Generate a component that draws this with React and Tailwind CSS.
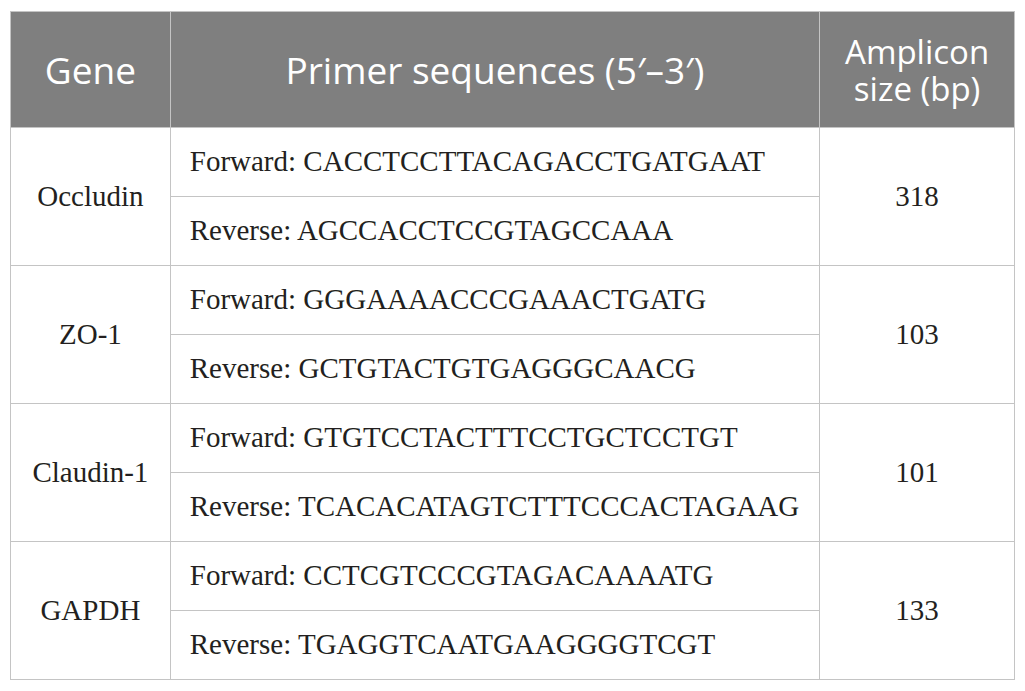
const rows = [
  { gene: "Occludin", fwd: "CACCTCCTTACAGACCTGATGAAT", rev: "AGCCACCTCCGTAGCCAAA", size: "318" },
  { gene: "ZO-1", fwd: "GGGAAAACCCGAAACTGATG", rev: "GCTGTACTGTGAGGGCAACG", size: "103" },
  { gene: "Claudin-1", fwd: "GTGTCCTACTTTCCTGCTCCTGT", rev: "TCACACATAGTCTTTCCCACTAGAAG", size: "101" },
  { gene: "GAPDH", fwd: "CCTCGTCCCGTAGACAAAATG", rev: "TGAGGTCAATGAAGGGGTCGT", size: "133" },
];

export default function App() {
  return (
    <div className="w-[1025px] h-[691px] bg-white pt-[11px] pl-[10px]">
      <table className="w-[1005px] border-collapse text-[#231f20] font-['Liberation_Serif',serif] text-[29px]">
        <colgroup>
          <col className="w-[160px]" />
          <col className="w-[650px]" />
          <col className="w-[195px]" />
        </colgroup>
        <thead>
          <tr className="h-[116px] bg-[#7f7f7f] text-white font-['Open_Sans',sans-serif] text-[37px]">
            <th className="border border-[#c4c4c4] font-normal">Gene</th>
            <th className="border border-[#c4c4c4] font-normal">Primer sequences (5′–3′)</th>
            <th className="border border-[#c4c4c4] font-normal text-[33px] leading-[37px]">Amplicon<br />size (bp)</th>
          </tr>
        </thead>
        <tbody>
          {rows.map((r) => (
            <>
              <tr key={r.gene + "f"} className="h-[69px]">
                <td rowSpan={2} className="border border-[#c4c4c4] text-center">{r.gene}</td>
                <td className="border border-[#c4c4c4] pl-[19px]">Forward: {r.fwd}</td>
                <td rowSpan={2} className="border border-[#c4c4c4] text-center">{r.size}</td>
              </tr>
              <tr key={r.gene + "r"} className="h-[69px]">
                <td className="border border-[#c4c4c4] pl-[19px]">Reverse: {r.rev}</td>
              </tr>
            </>
          ))}
        </tbody>
      </table>
    </div>
  );
}
